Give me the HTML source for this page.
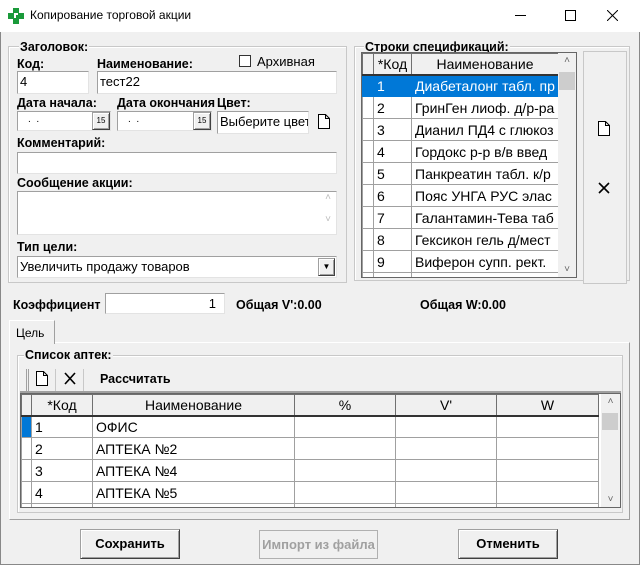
<!DOCTYPE html>
<html><head><meta charset="utf-8"><style>
*{box-sizing:border-box;margin:0;padding:0}
body{width:640px;height:565px;background:#f0f0f0;font-family:"Liberation Sans",Arial,sans-serif;font-size:13px;color:#000;position:relative;overflow:hidden}
.a{position:absolute}
.b{font-weight:bold;font-size:12.5px}
.inp{position:absolute;background:#fff;border:1px solid #a0a0a0;border-right-color:#e3e3e3;border-bottom-color:#e3e3e3;padding:2px 2px;font-size:13px;white-space:nowrap;overflow:hidden}
.grp{position:absolute;border:1px solid #c8c8c8;box-shadow:inset 1px 1px 0 #fff}
.lab{position:absolute;background:#f0f0f0;font-weight:bold;font-size:12.5px;padding:0 1px}
table{border-collapse:collapse;position:absolute;background:#fff;table-layout:fixed}
td{border:1px solid #a0a0a0;height:22px;padding:0 3px;white-space:nowrap;overflow:hidden;font-size:14px}
th{background:#f0f0f0;border:1px solid #707070;border-bottom:2px solid #333;font-weight:normal;font-size:14px;height:21px}
.btn{position:absolute;border:1px solid #a0a0a0;border-right-color:#404040;border-bottom-color:#404040;box-shadow:inset 1px 1px 0 #fff,inset -1px -1px 0 #a0a0a0;background:#f0f0f0;text-align:center;font-weight:bold;font-size:13px}
.sb{position:absolute;background:#f0f0f0;font-size:10px;color:#666;text-align:center}
</style></head><body>
<div class="a" style="left:0;top:0;width:640px;height:32px;background:#fff"></div>
<svg class="a" style="left:8px;top:8px" width="16" height="16"><path d="M5 0h6v5h5v6h-5v5H5v-5H0V5h5z" fill="#1a9a3a"/><path d="M6 5h4v2H8v3H6z" fill="#fff"/></svg>
<div class="a" style="left:30px;top:8px;font-size:12px">Копирование торговой акции</div>
<div class="a" style="left:515px;top:15px;width:11px;height:1px;background:#000"></div>
<div class="a" style="left:565px;top:10px;width:11px;height:11px;border:1px solid #000"></div>
<svg class="a" style="left:607px;top:10px" width="11" height="11"><path d="M0 0L11 11M11 0L0 11" stroke="#000"/></svg>
<div class="a" style="left:0;top:32px;width:640px;height:533px;border:1px solid #888;border-top:none"></div>

<div class="grp" style="left:8px;top:46px;width:339px;height:237px"></div>
<div class="lab" style="left:19px;top:40px">Заголовок:</div>
<div class="a b" style="left:17px;top:57px">Код:</div>
<div class="inp" style="left:17px;top:71px;width:72px;height:23px">4</div>
<div class="a b" style="left:97px;top:57px">Наименование:</div>
<div class="inp" style="left:97px;top:71px;width:240px;height:23px">тест22</div>
<div class="a" style="left:239px;top:55px;width:12px;height:12px;border:1px solid #333;background:#fff"></div>
<div class="a" style="left:257px;top:54px">Архивная</div>
<div class="a b" style="left:17px;top:96px">Дата начала:</div>
<div class="a b" style="left:117px;top:96px;width:100px;overflow:hidden;white-space:nowrap">Дата окончания</div>
<div class="a b" style="left:217px;top:96px">Цвет:</div>
<div class="inp" style="left:17px;top:111px;width:94px;height:20px;font-size:10px;padding-left:10px">.&nbsp;&nbsp;.</div>
<div class="btn" style="left:92px;top:112px;width:18px;height:18px;font-size:8px;font-weight:normal;line-height:15px">15</div>
<div class="inp" style="left:117px;top:111px;width:95px;height:20px;font-size:10px;padding-left:10px">.&nbsp;&nbsp;.</div>
<div class="btn" style="left:193px;top:112px;width:18px;height:18px;font-size:8px;font-weight:normal;line-height:15px">15</div>
<div class="inp" style="left:217px;top:111px;width:92px;height:23px;font-size:13px">Выберите цвет</div>
<svg class="a" style="left:318px;top:114px" width="12" height="15"><path d="M.5 .5h7l4 4v10H.5z M7.5 .5v4h4" fill="#fff" stroke="#000"/></svg>
<div class="a b" style="left:17px;top:136px">Комментарий:</div>
<div class="inp" style="left:17px;top:152px;width:320px;height:22px"></div>
<div class="a b" style="left:17px;top:176px">Сообщение акции:</div>
<div class="inp" style="left:17px;top:191px;width:320px;height:44px"></div>
<div class="sb" style="left:320px;top:192px;width:16px;height:42px;background:#fff;color:#bbb">˄<br><br>˅</div>
<div class="a b" style="left:17px;top:240px">Тип цели:</div>
<div class="inp" style="left:17px;top:256px;width:320px;height:22px">Увеличить продажу товаров</div>
<div class="btn" style="left:318px;top:258px;width:17px;height:18px;font-size:8px;line-height:16px">▼</div>

<div class="grp" style="left:354px;top:46px;width:276px;height:235px"></div>
<div class="lab" style="left:364px;top:40px">Строки спецификаций:</div>
<div class="a" style="left:361px;top:52px;width:216px;height:226px;border:1px solid #666;background:#fff;overflow:hidden">
<table style="left:0;top:0;width:196px">
<colgroup><col style="width:11px"><col style="width:38px"><col style="width:147px"></colgroup>
<tr><th></th><th>*Код</th><th>Наименование</th></tr>
<tr style="background:#0078d7;color:#fff"><td style="border-color:#0078d7"></td><td style="border-color:#0078d7">1</td><td style="border-color:#0078d7">Диабеталонг табл. пр</td></tr>
<tr><td></td><td>2</td><td>ГринГен лиоф. д/р-ра</td></tr>
<tr><td></td><td>3</td><td>Дианил ПД4 с глюкоз</td></tr>
<tr><td></td><td>4</td><td>Гордокс р-р в/в введ</td></tr>
<tr><td></td><td>5</td><td>Панкреатин табл. к/р</td></tr>
<tr><td></td><td>6</td><td>Пояс УНГА РУС элас</td></tr>
<tr><td></td><td>7</td><td>Галантамин-Тева таб</td></tr>
<tr><td></td><td>8</td><td>Гексикон гель д/мест</td></tr>
<tr><td></td><td>9</td><td>Виферон супп. рект.</td></tr>
<tr><td></td><td></td><td></td></tr>
</table>
<div class="sb" style="left:196px;top:0;width:18px;height:224px"><div style="margin-top:2px">˄</div><div style="position:absolute;top:19px;left:1px;width:16px;height:18px;background:#cdcdcd"></div><div style="position:absolute;bottom:2px;width:18px">˅</div></div>
</div>
<div class="btn" style="left:583px;top:51px;width:44px;height:233px;box-shadow:none;border-color:#c8c8c8"></div>
<svg class="a" style="left:598px;top:121px" width="12" height="15"><path d="M.5 .5h7l4 4v10H.5z M7.5 .5v4h4" fill="#fff" stroke="#000"/></svg>
<svg class="a" style="left:598px;top:182px" width="12" height="12"><path d="M1 1L11 11M11 1L1 11" stroke="#000" stroke-width="1.6"/></svg>

<div class="a b" style="left:13px;top:298px">Коэффициент</div>
<div class="inp" style="left:105px;top:293px;width:120px;height:21px;text-align:right;padding-right:8px">1</div>
<div class="a b" style="left:236px;top:298px">Общая V':0.00</div>
<div class="a b" style="left:420px;top:298px">Общая W:0.00</div>

<div class="a" style="left:9px;top:342px;width:621px;height:178px;border:1px solid #fff;border-right-color:#a0a0a0;border-bottom-color:#a0a0a0"></div>
<div class="a" style="left:9px;top:320px;width:46px;height:24px;border:1px solid #fff;border-right-color:#a0a0a0;border-bottom:none;background:#f0f0f0;font-size:12px;padding:5px 0 0 6px">Цель</div>
<div class="grp" style="left:17px;top:355px;width:606px;height:158px"></div>
<div class="lab" style="left:24px;top:348px">Список аптек:</div>
<div class="a" style="left:20px;top:366px;width:601px;height:27px;border-bottom:2px solid #a0a0a0"></div>
<div class="a" style="left:26px;top:369px;width:3px;height:22px;border-left:1px solid #a0a0a0;border-right:1px solid #a0a0a0"></div>
<svg class="a" style="left:36px;top:371px" width="12" height="15"><path d="M.5 .5h7l4 4v10H.5z M7.5 .5v4h4" fill="#fff" stroke="#000"/></svg>
<div class="a" style="left:55px;top:369px;width:1px;height:22px;background:#c8c8c8"></div>
<svg class="a" style="left:64px;top:372px" width="12" height="13"><path d="M1 1L11 12M11 1L1 12" stroke="#000" stroke-width="1.6"/></svg>
<div class="a" style="left:83px;top:369px;width:1px;height:22px;background:#c8c8c8"></div>
<div class="a b" style="left:100px;top:372px">Рассчитать</div>
<div class="a" style="left:20px;top:393px;width:601px;height:115px;border:1px solid #666;background:#fff;overflow:hidden">
<table style="left:0;top:0;width:577px">
<colgroup><col style="width:10px"><col style="width:61px"><col style="width:202px"><col style="width:101px"><col style="width:101px"><col style="width:102px"></colgroup>
<tr><th></th><th>*Код</th><th>Наименование</th><th>%</th><th>V'</th><th>W</th></tr>
<tr><td style="background:#0078d7"></td><td>1</td><td>ОФИС</td><td></td><td></td><td></td></tr>
<tr><td></td><td>2</td><td>АПТЕКА №2</td><td></td><td></td><td></td></tr>
<tr><td></td><td>3</td><td>АПТЕКА №4</td><td></td><td></td><td></td></tr>
<tr><td></td><td>4</td><td>АПТЕКА №5</td><td></td><td></td><td></td></tr>
<tr><td></td><td></td><td></td><td></td><td></td><td></td></tr>
</table>
<div class="sb" style="left:580px;top:0;width:19px;height:113px"><div style="margin-top:2px">˄</div><div style="position:absolute;top:19px;left:1px;width:16px;height:17px;background:#cdcdcd"></div><div style="position:absolute;bottom:2px;width:19px">˅</div></div>
</div>

<div class="btn" style="left:80px;top:529px;width:100px;height:30px;line-height:27px">Сохранить</div>
<div class="btn" style="left:259px;top:530px;width:119px;height:29px;line-height:27px;color:#a0a0a0;box-shadow:none;border-color:#b0b0b0">Импорт из файла</div>
<div class="btn" style="left:458px;top:529px;width:100px;height:30px;line-height:27px">Отменить</div>
</body></html>
